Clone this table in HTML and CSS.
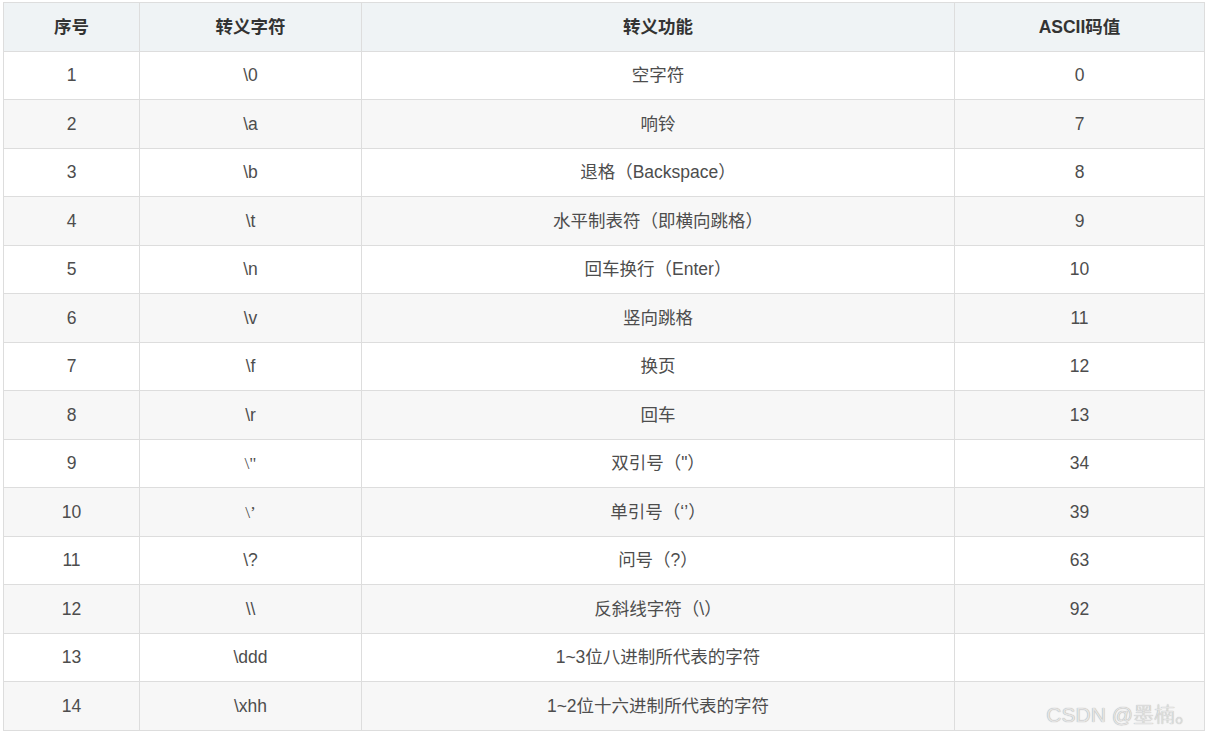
FILE: index.html
```html
<!DOCTYPE html>
<html lang="zh-CN">
<head>
<meta charset="utf-8">
<title>转义字符</title>
<link rel="stylesheet" href="styles.css">
</head>
<body>
<div class="wrap">
<table class="esc">
<colgroup><col class="c1"><col class="c2"><col class="c3"><col class="c4"></colgroup>
<thead>
<tr><th>序号</th><th>转义字符</th><th>转义功能</th><th>ASCII码值</th></tr>
</thead>
<tbody>
<tr><td>1</td><td>\0</td><td>空字符</td><td>0</td></tr>
<tr><td>2</td><td>\a</td><td>响铃</td><td>7</td></tr>
<tr><td>3</td><td>\b</td><td>退格（Backspace）</td><td>8</td></tr>
<tr><td>4</td><td>\t</td><td>水平制表符（即横向跳格）</td><td>9</td></tr>
<tr><td>5</td><td>\n</td><td>回车换行（Enter）</td><td>10</td></tr>
<tr><td>6</td><td>\v</td><td>竖向跳格</td><td>11</td></tr>
<tr><td>7</td><td>\f</td><td>换页</td><td>12</td></tr>
<tr><td>8</td><td>\r</td><td>回车</td><td>13</td></tr>
<tr><td>9</td><td class="serif">\"</td><td>双引号（"）</td><td>34</td></tr>
<tr><td>10</td><td class="serif">\’</td><td>单引号（‘’）</td><td>39</td></tr>
<tr><td>11</td><td>\?</td><td>问号（?）</td><td>63</td></tr>
<tr><td>12</td><td>\\</td><td>反斜线字符（\）</td><td>92</td></tr>
<tr><td>13</td><td>\ddd</td><td>1~3位八进制所代表的字符</td><td></td></tr>
<tr><td>14</td><td>\xhh</td><td>1~2位十六进制所代表的字符</td><td></td></tr>
</tbody>
</table>
<div class="mark">CSDN @墨楠。</div>
</div>
</body>
</html>
```
FILE: styles.css
```css
html, body {
  margin: 0;
  padding: 0;
  background: #ffffff;
}
body {
  padding: 2px 2px 0 3px;
  font-family: "Liberation Sans", Arial, "Noto Sans CJK SC", sans-serif;
}
.wrap {
  position: relative;
}
.esc {
  border-collapse: collapse;
  width: 1201px;
  table-layout: fixed;
  font-size: 17.5px;
  color: #4d4d4d;
}
.c1 { width: 136px; }
.c2 { width: 222px; }
.c3 { width: 593px; }
.c4 { width: 250px; }
.esc th, .esc td {
  border: 1px solid #dddddd;
  text-align: center;
  vertical-align: middle;
  padding: 0 8px;
  height: 47.5px;
  line-height: 24px;
}
.esc th {
  background: #eff3f5;
  color: #333333;
  font-weight: bold;
}
.esc tbody tr:nth-child(even) td {
  background: #f7f7f7;
}
.esc td.serif {
  font-family: "Liberation Serif", "Times New Roman", serif;
}
.mark {
  position: absolute;
  right: 8px;
  bottom: 3px;
  font-size: 21px;
  font-weight: 300;
  color: #e4e4e4;
  text-shadow: 0 0 1px rgba(0, 0, 0, 0.4);
  font-family: "Liberation Sans", Arial, "Noto Sans CJK SC", sans-serif;
  pointer-events: none;
}
```
